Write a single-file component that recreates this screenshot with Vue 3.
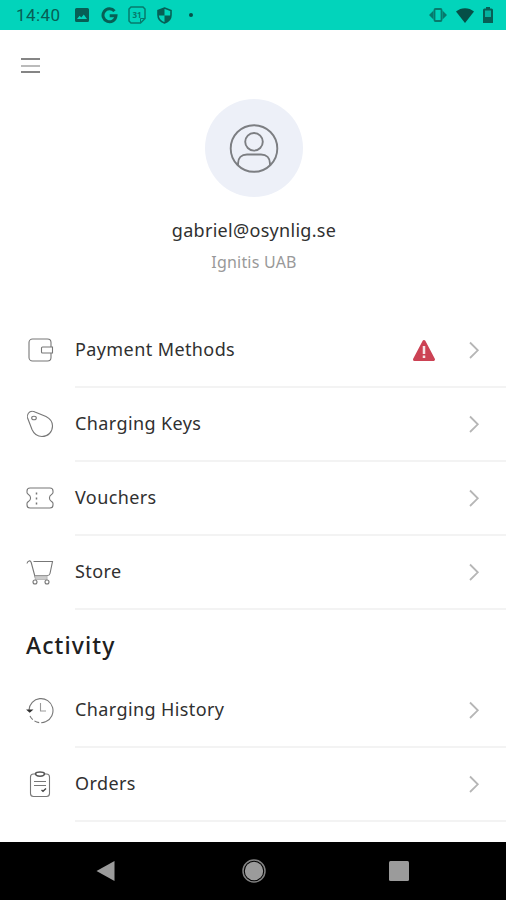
<template>
  <div class="screen">
    <header class="status-bar">
      <div class="status-left">
        <span class="status-time">14:40</span>
        <svg class="status-image" width="14" height="14" viewBox="0 0 14 14">
          <path fill="#075f55" fill-rule="evenodd" d="M1.500 0h11A1.500 1.500 0 0 1 14 1.500v11a1.500 1.500 0 0 1-1.500 1.500h-11A1.500 1.500 0 0 1 0 12.500v-11A1.500 1.500 0 0 1 1.500 0zM2 11h10L8.800 6.500 6.300 9.500 4.600 7.700z" />
        </svg>
        <svg class="status-google" width="17" height="17" viewBox="0 0 17 17">
          <path d="M13.500 4.100A6.500 6.500 0 1 0 15 8.700H8.700" fill="none" stroke="#075f55" stroke-width="3" />
        </svg>
        <svg class="status-calendar" width="18" height="18" viewBox="0 0 18 18">
          <path d="M3 1h12l2 2v9.500L12.500 17H3l-2-2V3z" fill="none" stroke="#07796c" stroke-width="1.500" />
          <path d="M12.500 17v-4.500H17" fill="none" stroke="#07796c" />
          <text x="9" y="11.500" text-anchor="middle" font-size="8" font-weight="700" fill="#07796c">31</text>
        </svg>
        <svg class="status-shield" width="15" height="17" viewBox="0 0 15 17">
          <path d="M7.500 1L14 3.500V8c0 4-2.800 6.800-6.500 8C3.800 14.800 1 12 1 8V3.500z" fill="none" stroke="#075f55" stroke-width="1.600" />
          <path d="M7.500 1v7.500H1V3.500zM7.500 8.500H14c-.4 4-3 6.300-6.500 7.500z" fill="#075f55" />
        </svg>
        <span class="status-dot"></span>
      </div>
      <div class="status-right">
        <svg width="18" height="14" viewBox="0 0 18 14">
          <rect x="5.500" y="1" width="7" height="12" rx="1" fill="none" stroke="#07796c" stroke-width="1.800" />
          <path d="M4.500 2.500v9L0 7zM13.500 2.500v9L18 7z" fill="#07796c" />
        </svg>
        <svg width="18" height="15" viewBox="0 0 18 15">
          <path d="M0 3.600C5-1 13-1 18 3.600L9 15z" fill="#064f47" />
        </svg>
        <svg width="10" height="16" viewBox="0 0 10 16">
          <path d="M3 0h4v1.500h1.500A1.500 1.500 0 0 1 10 3v13H0V3a1.500 1.500 0 0 1 1.500-1.500H3z" fill="#075f55" />
          <path d="M2 3.500h6v6.500H2z" fill="#04b39f" />
        </svg>
      </div>
    </header>

    <main class="content">
      <button class="menu-button" aria-label="Menu">
        <span></span>
        <span></span>
        <span></span>
      </button>

      <section class="profile">
        <div class="avatar">
          <svg width="50" height="50" viewBox="0 0 50 50" fill="none" stroke="#7c7e82" stroke-width="1.900">
            <circle cx="25" cy="25.500" r="23.300" />
            <circle cx="25" cy="18.800" r="8.800" />
            <path d="M9 42v-1.500c0-5.500 3.500-9 9-9h14c5.500 0 9 3.500 9 9V42" />
          </svg>
        </div>
        <p class="email">gabriel@osynlig.se</p>
        <p class="company">Ignitis UAB</p>
      </section>

      <template v-for="group in groups" :key="group.id">
        <h2 v-if="group.title" class="group-title">{{ group.title }}</h2>
        <ul class="menu-list">
          <li v-for="item in group.items" :key="item.icon" class="menu-item">
            <svg class="item-icon" width="28" height="28" viewBox="0 0 28 28">
              <template v-if="item.icon === 'wallet'">
                <rect x="3" y="3" width="22" height="22" rx="3.500" />
                <path d="M26.500 11h-10a1 1 0 0 0-1 1v4a1 1 0 0 0 1 1h10z" fill="#fff" />
              </template>
              <template v-else-if="item.icon === 'key'">
                <path d="M6.500 1.200C3 1 .6 4.500 1.600 8L6 19.500C8 24 11.500 26.500 16 26.500c6 0 10.500-4.500 10.500-10.500 0-4-2.500-7.500-6.500-9.500L9 2C8.200 1.500 7.400 1.200 6.500 1.200z" />
                <ellipse cx="8" cy="8" rx="2.300" ry="1.800" />
              </template>
              <template v-else-if="item.icon === 'voucher'">
                <path d="M4 4h20a3 3 0 0 1 3 3v1.500c0 1-.6 1.500-1.500 2a4 4 0 0 0 0 7c.9.500 1.500 1 1.500 2V21a3 3 0 0 1-3 3H4a3 3 0 0 1-3-3v-1.500c0-1 .6-1.500 1.500-2a4 4 0 0 0 0-7C1.600 10 1 9.500 1 8.500V7a3 3 0 0 1 3-3z" />
                <path d="M10.500 8.500v12" stroke-dasharray="2 3" stroke-width="1.500" />
              </template>
              <template v-else-if="item.icon === 'cart'">
                <path d="M1 5.500C1.500 2.500 4.500 2 5.200 4.500L9.500 20.500M7.500 3.500H26.500L24 15.500c-.3 1.300-1 2-2.500 2H9" />
                <path d="M9.500 18h11.500v3.500H9.500z" fill="#ccc" stroke="#bbb" />
                <circle cx="9" cy="24" r="2" fill="#fff" />
                <circle cx="21" cy="24" r="2" fill="#fff" />
              </template>
              <template v-else-if="item.icon === 'history'">
                <path d="M3 14A12 12 0 1 1 20 25.500" />
                <path d="M20 25.500A12 12 0 0 1 4 20" stroke-dasharray="5 2" />
                <path d="M1.500 14l2.200 2L6 14z" fill="#333" stroke="#333" />
                <path d="M14.500 7v8h5.500" stroke="#999" />
              </template>
              <template v-else>
                <rect x="4.500" y="4" width="19" height="22.500" rx="3" />
                <path d="M9.500 3.500C10.500 1.500 17.500 1.500 18.500 3.500c0 3.500-9 3.500-9 0z" fill="#fff" stroke="#555" stroke-width="1.500" />
                <path d="M8 11.500h12M8 15.500h12" />
                <path d="M15.500 20l1.500 1.300 3-2.800" stroke="#444" stroke-width="1.400" />
              </template>
            </svg>
            <div class="item-body">
              <span class="item-label">{{ item.label }}</span>
              <svg v-if="item.warning" class="item-warning" width="24" height="23" viewBox="0 0 24 23">
                <path d="M12 2.500L21.500 20.500h-19z" fill="#cc4254" stroke="#cc4254" stroke-width="3" stroke-linejoin="round" />
                <path d="M12 7v8M12 16.500v2.500" stroke="#f6e5e8" stroke-width="2.500" />
              </svg>
              <svg class="item-chevron" width="12" height="18" viewBox="0 0 12 18">
                <path d="M2 1.500L9.800 9.300 2 17" fill="none" stroke="#b6b6b6" stroke-width="1.800" />
              </svg>
            </div>
          </li>
        </ul>
      </template>
    </main>

    <nav class="nav-bar">
      <svg width="20" height="22" viewBox="0 0 20 22">
        <path d="M19.500 1v20L1.500 11z" fill="#9b9b9b" />
      </svg>
      <svg class="nav-home" width="24" height="24" viewBox="0 0 24 24">
        <circle cx="12" cy="12" r="11" fill="none" stroke="#828282" stroke-width="1.500" />
        <circle cx="12" cy="12" r="9.200" fill="#9b9b9b" />
      </svg>
      <svg width="20" height="20" viewBox="0 0 20 20">
        <rect width="20" height="20" rx="1.500" fill="#9b9b9b" />
      </svg>
    </nav>
  </div>
</template>

<script setup>
import { ref } from 'vue';

const groups = ref([
  {
    id: 'account',
    items: [
      { icon: 'wallet', label: 'Payment Methods', warning: true },
      { icon: 'key', label: 'Charging Keys' },
      { icon: 'voucher', label: 'Vouchers' },
      { icon: 'cart', label: 'Store' },
    ],
  },
  {
    id: 'activity',
    title: 'Activity',
    items: [
      { icon: 'history', label: 'Charging History' },
      { icon: 'orders', label: 'Orders' },
    ],
  },
]);
</script>

<style>
body {
  margin: 0;
}
</style>

<style scoped>
.screen {
  display: flex;
  flex-direction: column;
  width: 100%;
  height: 900px;
  overflow: hidden;
  background-color: #fff;
  font-family: 'Noto Sans', sans-serif;
  color: #303030;
}

.status-bar {
  display: flex;
  justify-content: space-between;
  align-items: center;
  height: 30px;
  padding: 0 13px 0 16px;
  box-sizing: border-box;
  background-color: #02d4bb;
}

.status-left,
.status-right {
  display: flex;
  align-items: center;
}

.status-right {
  gap: 9px;
}

.status-time {
  width: 59px;
  font-family: Roboto, sans-serif;
  font-size: 17px;
  letter-spacing: 0.4px;
  color: #075f55;
}

.status-google {
  margin-left: 12px;
}

.status-calendar {
  margin-left: 10px;
}

.status-shield {
  margin-left: 11px;
}

.status-dot {
  width: 4px;
  height: 4px;
  margin-left: 17px;
  border-radius: 50%;
  background-color: #064f47;
}

.content {
  flex: 1;
}

.menu-button {
  display: flex;
  flex-direction: column;
  justify-content: space-between;
  height: 15px;
  margin: 28px 0 0 21px;
  padding: 0;
  border: none;
  background: none;
}

.menu-button span {
  width: 19px;
  height: 2px;
  background-color: #858585;
}

.menu-button span:nth-child(2) {
  background-color: #bbb;
}

.profile {
  display: flex;
  flex-direction: column;
  align-items: center;
  height: 215px;
  margin-top: 26px;
  padding-left: 2px;
}

.avatar {
  display: flex;
  align-items: center;
  justify-content: center;
  width: 98px;
  height: 98px;
  border-radius: 50%;
  background-color: #edf0f8;
}

.email {
  margin: 21px 0 0;
  font-size: 18px;
  line-height: 24px;
  letter-spacing: 0.3px;
}

.company {
  margin: 9px 0 0;
  font-size: 16px;
  line-height: 22px;
  letter-spacing: 0.2px;
  color: #999;
}

.menu-list {
  margin: 0;
  padding: 0;
  list-style: none;
}

.menu-item {
  display: flex;
  align-items: center;
  height: 74px;
  padding-left: 26px;
}

.item-icon {
  flex-shrink: 0;
  margin: 0 21px 2px 0;
  fill: none;
  stroke: #777;
  stroke-width: 1.1;
}

.item-body {
  display: flex;
  align-items: center;
  flex: 1;
  height: 72px;
  padding-right: 26px;
  border-bottom: 2px solid #f3f3f3;
}

.item-label {
  flex: 1;
  padding-bottom: 2px;
  font-size: 18px;
  letter-spacing: 0.4px;
}

.item-warning {
  margin-right: 32px;
}

.group-title {
  height: 64px;
  margin: 0;
  padding-left: 26px;
  font-size: 23px;
  font-weight: 500;
  line-height: 70px;
  letter-spacing: 1.1px;
  color: #202020;
}

.nav-bar {
  display: flex;
  justify-content: space-between;
  align-items: center;
  height: 58px;
  padding: 0 97px 0 95px;
  box-sizing: border-box;
  background-color: #000;
}

.nav-home {
  margin-left: 3px;
}
</style>
